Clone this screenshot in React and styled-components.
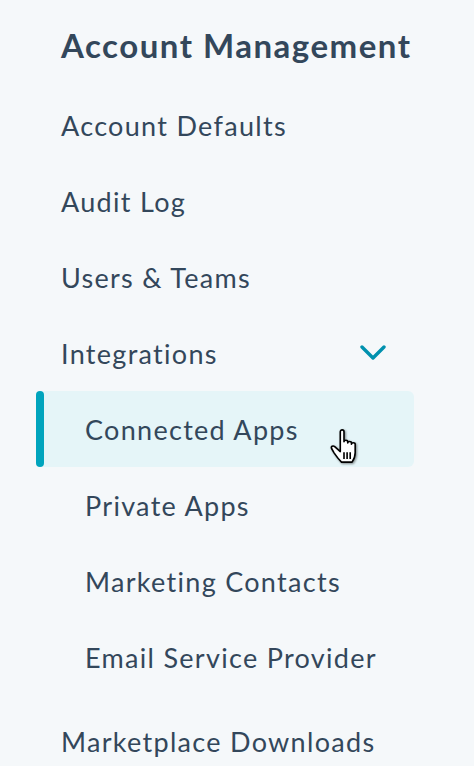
import React from "react";
import styled, { createGlobalStyle } from "styled-components";

const Global = createGlobalStyle`
  html, body { margin: 0; padding: 0; background: #f5f8fa; }
  body { font-family: Lato, "Noto Sans", sans-serif; color: #33475b; overflow: hidden; }
`;

const Nav = styled.nav`
  width: 474px;
  box-sizing: border-box;
  padding: 0 60px 0 36px;
  display: flex;
  flex-direction: column;
`;

const Heading = styled.h2`
  margin: 0;
  flex: none;
  height: 87px;
  display: flex;
  align-items: center;
  padding-left: 25px;
  box-sizing: border-box;
  padding-top: 2px;
  font-size: 33px;
  font-weight: 700;
  letter-spacing: 1.5px;
  color: #33475b;
`;

const List = styled.ul`
  list-style: none;
  margin: 0;
  padding: 0;
  display: flex;
  flex-direction: column;
  flex: none;
`;

const SubList = styled(List)`
  margin-bottom: 8px;
`;

const Item = styled.li`
  position: relative;
  flex: none;
  height: 76px;
  display: flex;
  align-items: center;
  justify-content: space-between;
  box-sizing: border-box;
  padding: 0 28px 0 ${(p) => (p.$sub ? 49 : 25)}px;
  font-size: 27px;
  letter-spacing: 1.3px;
  border-radius: 6px;
  background: ${(p) => (p.$active ? "#e5f5f8" : "transparent")};
  &::before {
    content: "";
    display: ${(p) => (p.$active ? "block" : "none")};
    position: absolute;
    left: 0;
    top: 0;
    bottom: 0;
    width: 8px;
    border-radius: 4px;
    background: #00a4bd;
  }
`;

const Chevron = styled.svg`
  width: 26px;
  height: 16px;
  flex: none;
`;

const Cursor = styled.svg`
  position: absolute;
  left: 291px;
  top: 37px;
  width: 34px;
  height: 36px;
  filter: drop-shadow(1px 1px 1px rgba(0, 0, 0, 0.45));
`;

const top = ["Account Defaults", "Audit Log", "Users & Teams"];
const sub = ["Connected Apps", "Private Apps", "Marketing Contacts", "Email Service Provider"];

export default function App() {
  return (
    <>
      <Global />
      <Nav>
        <Heading>Account Management</Heading>
        <List>
          {top.map((t) => (
            <Item key={t}>{t}</Item>
          ))}
          <Item>
            Integrations
            <Chevron viewBox="0 0 26 16">
              <path d="M2 2 L13 13 L24 2" fill="none" stroke="#0091ae" strokeWidth="3.4" strokeLinecap="round" strokeLinejoin="round" />
            </Chevron>
          </Item>
        </List>
        <SubList>
          {sub.map((t, i) => (
            <Item key={t} $sub $active={i === 0}>
              {t}
              {i === 0 && (
                <Cursor viewBox="0 0 22 29">
                  <path
                    d="M8 3 C8 1 11 1 11 3 L11 11 C11 9.5 14 9.5 14 11 L14 12 C14 10.5 17 10.5 17 12 L17 13 C17 11.5 20 11.5 20 13 L20 20 C20 23.5 19 25.5 17.5 27.5 L9 27.5 C7.5 26 5 23 3 20 L1 16.5 C0.3 15 2 13.8 3.5 15 L8 19 Z"
                    fill="#fff"
                    stroke="#000"
                    strokeWidth="1.3"
                    strokeLinejoin="round"
                  />
                  <path d="M11 19.5 V25 M13.5 19.5 V25 M16 19.5 V25" stroke="#000" strokeWidth="1.3" />
                </Cursor>
              )}
            </Item>
          ))}
        </SubList>
        <List>
          <Item>Marketplace Downloads</Item>
        </List>
      </Nav>
    </>
  );
}
